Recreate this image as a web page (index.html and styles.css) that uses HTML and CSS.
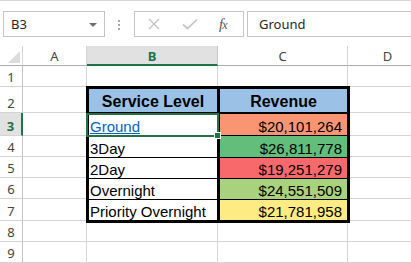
FILE: index.html
```html
<!DOCTYPE html>
<html>
<head>
<meta charset="utf-8">
<link rel="stylesheet" href="styles.css">
</head>
<body>
<div class="app">
  <div class="fbar">
    <div class="namebox"><span>B3</span><span class="nb-arrow"></span></div>
    <div class="grip"><i></i><i></i><i></i></div>
    <div class="btns">
      <svg class="ic-x" width="12" height="12" viewBox="0 0 12 12"><path d="M1 1L11 11M11 1L1 11" stroke="#c4c4c4" stroke-width="1.4" fill="none"/></svg>
      <svg class="ic-ok" width="16" height="12" viewBox="0 0 16 12"><path d="M1 6.5L5.5 10.5L15 1.5" stroke="#c4c4c4" stroke-width="1.7" fill="none"/></svg>
      <span class="fx"><i>f</i><i class="fx-x">x</i></span>
    </div>
    <div class="formula">Ground</div>
  </div>
  <div class="sheet">
    <div class="corner"><span class="tri"></span></div>
    <div class="ch">A</div><div class="ch sel">B</div><div class="ch">C</div><div class="ch">D</div>

    <div class="rh">1</div><div class="c"></div><div class="c"></div><div class="c"></div><div class="c"></div>
    <div class="rh">2</div><div class="c"></div><div class="c"></div>
    <div class="rh sel">3</div><div class="c"></div><div class="c"></div>
    <div class="rh">4</div><div class="c"></div><div class="c"></div>
    <div class="rh">5</div><div class="c"></div><div class="c"></div>
    <div class="rh">6</div><div class="c"></div><div class="c"></div>
    <div class="rh">7</div><div class="c"></div><div class="c"></div>
    <div class="rh">8</div><div class="c"></div><div class="c"></div><div class="c"></div><div class="c"></div>
    <div class="rh">9</div><div class="c"></div><div class="c"></div><div class="c"></div><div class="c"></div>

    <div class="tbl">
      <div class="th">Service Level</div><div class="th rv">Revenue</div>
      <div class="td r3"><span class="link">Ground</span></div><div class="td rv num r3" style="background:#fa9573">$20,101,264</div>
      <div class="td r4">3Day</div><div class="td rv num r4" style="background:#63be7b">$26,811,778</div>
      <div class="td r5">2Day</div><div class="td rv num r5" style="background:#f8696b">$19,251,279</div>
      <div class="td r6">Overnight</div><div class="td rv num r6" style="background:#a9d27f">$24,551,509</div>
      <div class="td r7">Priority Overnight</div><div class="td rv num r7" style="background:#ffeb84">$21,781,958</div>
    </div>
    <div class="selbox"><span class="handle"></span></div>
  </div>
</div>
</body>
</html>
```
FILE: styles.css
```css
* { box-sizing: border-box; margin: 0; padding: 0; }
html, body { width: 411px; height: 263px; overflow: hidden; background: #fff; }
body { font-family: "Liberation Sans", Arial, sans-serif; }

.app { width: 411px; height: 263px; overflow: hidden; display: flex; flex-direction: column; }

/* formula bar */
.fbar {
  height: 46px;
  flex: none;
  border-top: 1px solid #d8d8d8;
  display: flex;
  align-items: flex-start;
  padding: 10px 0 0 3px;
  font-family: "Noto Sans", sans-serif;
  font-size: 13px;
  color: #262626;
}
.namebox {
  width: 102px;
  height: 26px;
  border: 1px solid #c6c6c6;
  display: flex;
  align-items: center;
  justify-content: space-between;
  padding: 0 7px 0 7px;
}
.nb-arrow {
  width: 0; height: 0;
  border-left: 4px solid transparent;
  border-right: 4px solid transparent;
  border-top: 4px solid #6e6e6e;
  margin-top: 1px;
}
.grip { margin: 9px 0 0 13px; display: flex; flex-direction: column; gap: 2px; }
.grip i { display: block; width: 2px; height: 2px; background: #a8a8a8; }
.btns {
  margin-left: 14px;
  width: 110px;
  height: 26px;
  border: 1px solid #c6c6c6;
  display: flex;
  align-items: center;
  padding-left: 13px;
}
.ic-ok { margin-left: 22px; }
.fx {
  margin-left: 21px;
  font-family: "Liberation Serif", serif;
  font-size: 15px;
  color: #555;
  letter-spacing: -1px;
}
.fx-x { font-size: 12px; }
.formula {
  margin-left: 3px;
  flex: 1;
  margin-right: -20px;
  height: 26px;
  border: 1px solid #c6c6c6;
  padding-left: 11px;
  line-height: 24px;
}

/* sheet */
.sheet {
  display: grid;
  grid-template-columns: 23px 64px 131px 130px 80px;
  grid-template-rows: 20px 21px 26px 23px 21px 21px 21px 22px 21px 21px;
  width: 418px;
  font-family: "Noto Sans", sans-serif;
  font-size: 13px;
  color: #444;
}
.corner {
  border-right: 1px solid #d4d4d4;
  border-bottom: 1px solid #ababab;
  display: flex;
  align-items: flex-end;
  justify-content: flex-end;
  padding: 0 2px 2px 0;
}
.tri {
  width: 0; height: 0;
  border-left: 12px solid transparent;
  border-bottom: 12px solid #dcdcdc;
}
.ch {
  border-right: 1px solid #d4d4d4;
  border-bottom: 1px solid #ababab;
  display: flex;
  align-items: center;
  justify-content: center;
  line-height: 16px;
  padding-top: 1px;
}
.ch.sel {
  background: #e1e1e1;
  color: #217346;
  font-weight: bold;
  border-bottom: 2px solid #217346;
  border-right-color: #c6c6c6;
}
.rh {
  border-right: 1px solid #c2c2c2;
  border-bottom: 1px solid #d4d4d4;
  display: flex;
  align-items: flex-end;
  justify-content: center;
  line-height: 16px;
  padding-bottom: 1px;
}
.rh.sel {
  background: #e1e1e1;
  color: #217346;
  font-weight: bold;
  border-right: 2px solid #217346;
}
.c {
  border-right: 1px solid #d4d4d4;
  border-bottom: 1px solid #d4d4d4;
}

/* table */
.tbl {
  grid-column: 3 / 5;
  grid-row: 3 / 9;
  margin: -1px -2px -2px -1px;
  border: 3px solid #000;
  background: #fff;
  display: grid;
  grid-template-columns: 128px 130px;
  grid-template-rows: 25px 22px 22px 21px 21px 20px;
  font-family: "Liberation Sans", Arial, sans-serif;
  font-size: 15px;
  color: #000;
  position: relative;
  z-index: 1;
}
.th {
  background: #9bc2e6;
  border-bottom: 2px solid #000;
  font-weight: bold;
  font-size: 16px;
  display: flex;
  align-items: flex-end;
  justify-content: center;
  line-height: 19px;
  padding-bottom: 1px;
}
.rv { border-left: 3px solid #000; }
.td {
  display: flex;
  align-items: flex-end;
  line-height: 17px;
  padding-left: 1px;
  border-bottom: 1px solid #000;
}
.td.r7 { border-bottom: none; }
.num { justify-content: flex-end; padding-right: 5px; }
.link { color: #0563c1; text-decoration: underline; }

.selbox {
  grid-column: 3;
  grid-row: 4;
  margin: 0 -1px -1px -1px;
  border: 2px solid #217346;
  position: relative;
  z-index: 2;
}
.handle {
  position: absolute;
  right: -4px;
  bottom: -4px;
  width: 7px;
  height: 7px;
  background: #217346;
  border: 1px solid #fff;
}
```
